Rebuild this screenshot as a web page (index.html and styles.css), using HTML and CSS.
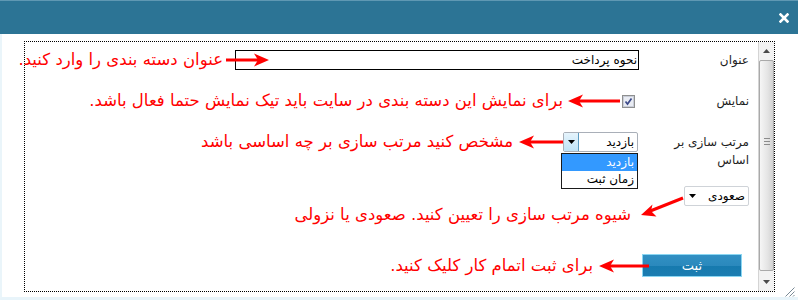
FILE: index.html
```html
<!DOCTYPE html>
<html lang="fa">
<head>
<meta charset="utf-8">
<title>دسته بندی</title>
<link rel="stylesheet" href="styles.css">
</head>
<body>
<div class="dialog">
  <div class="titlebar">
    <span class="close" title="بستن">
      <svg width="10" height="10" viewBox="0 0 10 10"><path d="M1.5 1.5 L8.5 8.5 M8.5 1.5 L1.5 8.5" stroke="#fff" stroke-width="2.6" stroke-linecap="square"/></svg>
    </span>
  </div>
  <div class="pane">
    <div class="frame">
      <div class="content" dir="rtl">
        <div class="row r1">
          <div class="lbl">عنوان</div>
          <div class="field"><div class="input">نحوه پرداخت</div></div>
          <svg class="arr a1" width="43" height="14" viewBox="0 0 43 14"><rect x="0" y="5.5" width="33" height="3" fill="#f00"/><polygon points="43,7 28,0.5 32,7 28,13.5" fill="#f00"/></svg>
          <span class="note n1">عنوان دسته بندی را وارد کنید.</span>
        </div>
        <div class="row r2">
          <div class="lbl">نمایش</div>
          <div class="field fcheck">
            <svg class="check" width="13" height="13" viewBox="0 0 13 13"><rect x="0.5" y="0.5" width="12" height="12" fill="#f4f4f4" stroke="#8e8f8f"/><rect x="1.5" y="1.5" width="10" height="10" fill="#e9ecf3" stroke="#c9cdd8"/><path d="M3.5 6.5 L5.5 9 L9.5 3.5" fill="none" stroke="#3c4a8a" stroke-width="1.7"/></svg>
          </div>
          <svg class="arr a2" width="52" height="14" viewBox="0 0 52 14"><rect x="10" y="5.5" width="42" height="3" fill="#f00"/><polygon points="0,7 15,0.5 11,7 15,13.5" fill="#f00"/></svg>
          <span class="note n2">برای نمایش این دسته بندی در سایت باید تیک نمایش حتما فعال باشد.</span>
        </div>
        <div class="row r3">
          <div class="lbl">مرتب سازی بر اساس</div>
          <div class="field fsel">
            <div class="select open">
              <span class="sel-text">بازدید</span>
              <span class="sel-btn"><svg width="7" height="4" viewBox="0 0 7 4"><polygon points="0,0 7,0 3.5,4" fill="#000"/></svg></span>
              <ul class="list">
                <li class="on">بازدید</li>
                <li>زمان ثبت</li>
              </ul>
            </div>
          </div>
          <svg class="arr a3" width="47" height="14" viewBox="0 0 47 14"><rect x="10" y="5.5" width="37" height="3" fill="#f00"/><polygon points="0,7 15,0.5 11,7 15,13.5" fill="#f00"/></svg>
          <span class="note n3">مشخص کنید مرتب سازی بر چه اساسی باشد</span>
        </div>
        <div class="row r4">
          <div class="select small">
            <span class="sel-text">صعودی</span>
            <span class="sel-arrow"><svg width="7" height="4" viewBox="0 0 7 4"><polygon points="0,0 7,0 3.5,4" fill="#000"/></svg></span>
          </div>
          <svg class="arr a4" width="45" height="30" viewBox="0 0 45 30"><line x1="44" y1="8" x2="10" y2="21.5" stroke="#f00" stroke-width="3"/><polygon points="2,25 13.5,14.5 12,21 17.5,26.5" fill="#f00"/></svg>
          <span class="note n4">شیوه مرتب سازی را تعیین کنید. صعودی یا نزولی</span>
        </div>
        <div class="row r5">
          <button class="btn" type="button">ثبت</button>
          <svg class="arr a5" width="50" height="14" viewBox="0 0 50 14"><rect x="10" y="5.5" width="40" height="3" fill="#f00"/><polygon points="0,7 15,0.5 11,7 15,13.5" fill="#f00"/></svg>
          <span class="note n5">برای ثبت اتمام کار کلیک کنید.</span>
        </div>
      </div>
      <div class="scrollbar">
        <div class="sb-btn"><svg width="7" height="4" viewBox="0 0 7 4"><polygon points="0,4 7,4 3.5,0" fill="#4a4a4a"/></svg></div>
        <div class="sb-track">
          <div class="sb-thumb"><span class="grip-lines"></span></div>
        </div>
        <div class="sb-btn"><svg width="7" height="4" viewBox="0 0 7 4"><polygon points="0,0 7,0 3.5,4" fill="#4a4a4a"/></svg></div>
      </div>
    </div>
    <svg class="resize" width="11" height="11" viewBox="0 0 11 11"><path d="M10.5 1.5 L1.5 10.5 M10.5 5.5 L5.5 10.5 M10.5 9 L9 10.5" stroke="#7a8a96" stroke-width="1"/></svg>
  </div>
</div>
</body>
</html>
```

FILE: styles.css
```css
* { box-sizing: border-box; }

html, body {
  margin: 0;
  padding: 0;
  width: 798px;
  height: 300px;
  overflow: hidden;
  background: #ffffff;
  font-family: "DejaVu Sans", "Noto Sans", sans-serif;
}

.dialog {
  width: 798px;
  height: 300px;
  display: flex;
  flex-direction: column;
}

.titlebar {
  height: 34px;
  flex: none;
  background: #2c7495;
  border-top: 1px solid #5f98b3;
  display: flex;
  justify-content: flex-end;
  align-items: center;
  padding-right: 9px;
}

.close {
  display: flex;
  width: 10px;
  height: 10px;
}

.pane {
  position: relative;
  flex: 1;
  background: #fff;
  border-left: 2px solid #eaf5fa;
  border-bottom: 3px solid #e8f4fa;
  padding: 7px 0 0 22px;
}

.frame {
  width: 751px;
  height: 251px;
  border: 1px dotted #000;
  display: flex;
}

.content {
  flex: 1;
  min-width: 0;
  padding: 8px 9px 0 0;
  display: flex;
  flex-direction: column;
}

.row {
  display: flex;
  align-items: center;
  height: 20px;
  flex: none;
}

.r2 { margin-top: 21px; }
.r3 { margin-top: 21px; height: 36px; align-items: flex-start; }
.r4 { margin-top: 18px; height: 20px; align-items: flex-start; }
.r5 { margin-top: 48px; height: 23px; }

.lbl {
  width: 110px;
  flex: none;
  padding-left: 30px;
  font-size: 12px;
  line-height: 18px;
  color: #1e1e1e;
}
.r3 .lbl { margin-top: 1px; }

.field {
  flex: none;
  display: flex;
  align-items: center;
}

.input {
  width: 404px;
  height: 20px;
  border: 1px solid #000;
  font-size: 12px;
  line-height: 18px;
  padding-right: 1px;
  color: #000;
  background: #fff;
}

.fcheck { padding-right: 4px; }
.check { display: block; }

.fsel { padding-right: 1px; position: relative; }

.arr { flex: none; display: block; }
.a1 { margin-right: -34px; }
.a2 { margin-right: 2px; }
.a3 { margin-right: -3px; margin-top: 3px; }
.a4 { margin-top: 4px; }
.a5 { margin-right: -7px; }

.note {
  color: #ff0000;
  font-size: 16.5px;
  line-height: 20px;
  white-space: nowrap;
  flex: none;
}
.n1 { margin-right: 3px; }
.n2 { margin-right: 5px; }
.n3 { margin-right: 6px; }
.n4 { margin-right: 8px; margin-top: 19px; }
.n5 { margin-right: 6px; }

.select {
  position: relative;
  width: 75px;
  height: 20px;
  border: 1px solid #a9afb8;
  border-radius: 2px;
  background: #fff;
  display: flex;
  align-items: center;
  font-size: 12px;
  color: #000;
}

.sel-text {
  flex: 1;
  padding-right: 3px;
  line-height: 18px;
}

.sel-btn {
  width: 15px;
  height: 18px;
  flex: none;
  display: flex;
  align-items: center;
  justify-content: center;
  background: linear-gradient(#e6f4fc, #bfe3f7);
  border-right: 1px solid #5c9ac0;
  border-radius: 0 0 0 1px;
}

.sel-btn svg, .sel-arrow svg { display: block; }

.list {
  position: absolute;
  top: 20px;
  right: -1px;
  width: 77px;
  margin: 0;
  padding: 0;
  list-style: none;
  border: 1px solid #1a1a1a;
  background: #fff;
  z-index: 2;
}

.list li {
  height: 17px;
  line-height: 17px;
  padding-right: 3px;
  font-size: 12px;
  color: #000;
}

.list li.on {
  background: #3399ff;
  color: #fff;
}

.select.small {
  width: 65px;
  height: 20px;
  border-color: #cfd3d8;
  flex: none;
}

.sel-arrow {
  width: 14px;
  flex: none;
  display: flex;
  justify-content: center;
}

.btn {
  flex: none;
  width: 100px;
  height: 23px;
  margin: 0 7px 0 0;
  padding: 0;
  border: 1px solid #8ad6f2;
  background: linear-gradient(#3190c3 0%, #2b89bd 50%, #167aae 52%, #1b7db2 100%);
  color: #fff;
  font-family: "DejaVu Sans", sans-serif;
  font-size: 13px;
  line-height: 21px;
}

.scrollbar {
  width: 16px;
  flex: none;
  display: flex;
  flex-direction: column;
  background: #f2f2f2;
  border-left: 1px solid #d4d4d4;
}

.sb-btn {
  height: 18px;
  flex: none;
  display: flex;
  align-items: center;
  justify-content: center;
}

.sb-track {
  flex: 1;
  display: flex;
  padding: 0 0 2px 0;
}

.sb-thumb {
  flex: 1;
  border: 1px solid #a9a9a9;
  border-radius: 2px;
  background: linear-gradient(to right, #f6f6f6, #e4e4e4 60%, #d2d2d2);
  display: flex;
  align-items: center;
  justify-content: center;
}

.grip-lines {
  width: 6px;
  height: 7px;
  background: repeating-linear-gradient(#8c8c8c 0 1px, transparent 1px 3px);
  margin-bottom: 48px;
}

.resize {
  position: absolute;
  right: 3px;
  bottom: 0;
}
```
